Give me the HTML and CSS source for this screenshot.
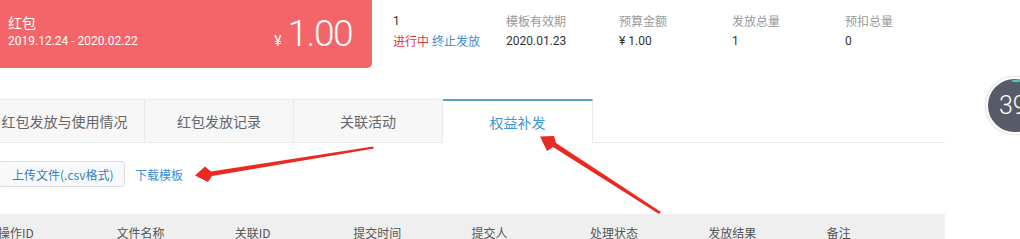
FILE: index.html
```html
<!DOCTYPE html>
<html lang="zh-CN">
<head>
<meta charset="utf-8">
<title>权益补发</title>
<link rel="stylesheet" href="styles.css">
</head>
<body>
<div class="page">
  <div class="top">
    <div class="card">
      <div class="card-left">
        <div class="card-title">红包</div>
        <div class="card-date">2019.12.24 - 2020.02.22</div>
      </div>
      <div class="card-price"><span class="yen">¥</span><span class="num">1.00</span></div>
    </div>
    <div class="info">
      <div class="col c1">
        <div class="val">1</div>
        <div class="val"><span class="status">进行中</span> <span class="link">终止发放</span></div>
      </div>
      <div class="col">
        <div class="lbl">模板有效期</div>
        <div class="val">2020.01.23</div>
      </div>
      <div class="col">
        <div class="lbl">预算金额</div>
        <div class="val">¥ 1.00</div>
      </div>
      <div class="col">
        <div class="lbl">发放总量</div>
        <div class="val">1</div>
      </div>
      <div class="col">
        <div class="lbl">预扣总量</div>
        <div class="val">0</div>
      </div>
    </div>
  </div>

  <div class="tabs">
    <div class="tab first">红包发放与使用情况</div>
    <div class="tab">红包发放记录</div>
    <div class="tab">关联活动</div>
    <div class="tab active">权益补发</div>
    <div class="tab-rest"></div>
  </div>

  <div class="actions">
    <button class="btn">上传文件(.csv格式)</button>
    <a class="dl">下载模板</a>
  </div>

  <div class="thead">
    <div class="th">操作ID</div>
    <div class="th">文件名称</div>
    <div class="th">关联ID</div>
    <div class="th">提交时间</div>
    <div class="th">提交人</div>
    <div class="th">处理状态</div>
    <div class="th">发放结果</div>
    <div class="th">备注</div>
  </div>

  <div class="badge">39</div>

  <svg class="arrows" width="1020" height="239" viewBox="0 0 1020 239" xmlns="http://www.w3.org/2000/svg">
    <path d="M373 146.5 L374 148.5 L212 176 L208 182 L195 175.5 L205 166.5 L211 171.5 Z" fill="#ea2a22"/>
    <path d="M661 212 L659 214 L553 147 L547 151 L540 136.5 L554 136 L556 143 Z" fill="#ea2a22"/>
  </svg>
</div>
</body>
</html>
```

FILE: styles.css
```css
* { box-sizing: border-box; margin: 0; padding: 0; }
html, body { width: 1020px; height: 239px; overflow: hidden; background: #fff; }
body {
  font-family: "Noto Sans CJK SC", "Microsoft YaHei", Roboto, sans-serif;
  font-size: 12px;
  color: #333;
}
.page { position: relative; width: 1020px; height: 239px; overflow: hidden; }

.top { display: flex; height: 68px; }
.card {
  width: 372px;
  height: 68px;
  background: #f4656a;
  border-radius: 0 0 5px 0;
  color: #fff;
  display: flex;
  justify-content: space-between;
  align-items: flex-start;
  padding: 12px 20px 0 8px;
}
.card-title { font-size: 14px; line-height: 20px; }
.card-date { font-family: Roboto, sans-serif; font-size: 12px; line-height: 16px; margin-top: 1px; }
.card-price { display: flex; align-items: baseline; margin-top: 2px; font-family: Roboto, sans-serif; }
.yen { font-size: 14px; margin-right: 6px; }
.num { font-size: 37px; font-weight: 300; letter-spacing: -1.5px; line-height: 40px; }

.info { display: flex; margin-left: 21px; padding-top: 13px; }
.col { width: 113px; display: flex; flex-direction: column; gap: 4px; }
.col .lbl, .col .val { line-height: 16px; font-size: 12px; }
.lbl { color: #999; }
.val { color: #333; font-family: Roboto, "Noto Sans CJK SC", sans-serif; }
.status { color: #e4393c; font-family: "Noto Sans CJK SC", sans-serif; }
.link { color: #3a8ed4; font-family: "Noto Sans CJK SC", sans-serif; }

.tabs { display: flex; margin-top: 31px; height: 44px; margin-left: -11px; }
.tab {
  width: 149px;
  height: 44px;
  background: #f7f7f7;
  border: 1px solid #e9e9e9;
  border-left: none;
  display: flex;
  align-items: center;
  justify-content: center;
  font-size: 14px;
  color: #666;
}
.tab.first { width: 156px; padding-right: 4px; }
.tab.active {
  background: #fff;
  border-top: 2px solid #58a3d3;
  border-bottom: none;
  color: #3e96d2;
  width: 150px;
}
.tab-rest { width: 352px; border-bottom: 1px solid #e8e8e8; }

.actions { display: flex; align-items: center; margin-top: 18px; height: 26px; }
.btn {
  width: 126px;
  height: 26px;
  margin-left: -1px;
  border: 1px solid #dcdcdc;
  border-radius: 3px;
  background: #f8f9fa;
  color: #2f7fc4;
  font-family: "Noto Sans CJK SC", sans-serif;
  font-size: 12px;
  text-align: left;
  padding-left: 12px;
}
.dl { margin-left: 10px; color: #3a8ed4; font-size: 12px; }

.thead {
  display: flex;
  margin-top: 27px;
  width: 947px;
  height: 34px;
  background: #efeff0;
  align-items: center;
  margin-left: -2px;
}
.th { width: 119.7px; color: #555; font-size: 12px; padding-top: 2px; }

.badge {
  position: absolute;
  left: 986px;
  top: 77px;
  width: 57px;
  height: 57px;
  border-radius: 50%;
  background: #575b68;
  border: 2px solid #fff;
  box-shadow: 0 0 3px rgba(0,0,0,0.25);
  color: #fff;
  font-family: Roboto, sans-serif;
  font-weight: 300;
  font-size: 25px;
  line-height: 53px;
  padding-left: 11px;
}
.badge::before {
  content: "";
  position: absolute;
  left: 24px;
  top: 1px;
  width: 8px;
  height: 2px;
  border-radius: 1px;
  background: #4cc9b0;
}

.arrows { position: absolute; left: 0; top: 0; pointer-events: none; }
```
